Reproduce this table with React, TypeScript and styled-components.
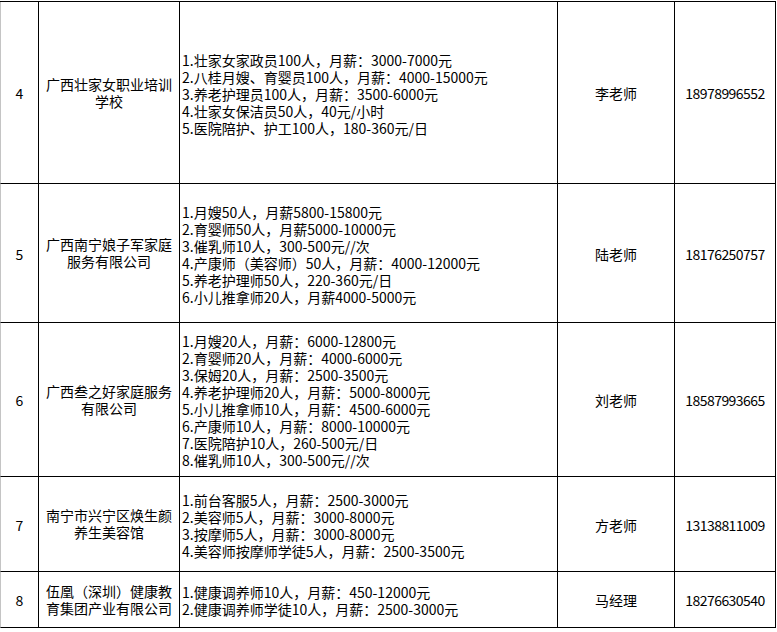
import * as React from 'react'
import styled, { createGlobalStyle } from 'styled-components'

const GlobalStyle = createGlobalStyle`
  html, body {
    margin: 0;
    padding: 0;
    background: #fff;
  }

  body {
    font-family: "Noto Sans CJK SC", "Noto Sans", sans-serif;
    font-size: 14px;
    color: #000;
  }

  * {
    box-sizing: border-box;
  }
`

const COLUMNS = '39px 141px 378px 117px 101px'

const Sheet = styled.section`
  width: 776px;
  margin-top: 1px;
  border-top: 1px solid #000;
  background: #fff;
`

const Row = styled.div<{ $height: number }>`
  display: grid;
  grid-template-columns: ${COLUMNS};
  height: ${(p) => p.$height}px;
`

const Cell = styled.div<{ $align?: 'left' | 'center'; $first?: boolean }>`
  display: flex;
  align-items: center;
  justify-content: ${(p) => (p.$align === 'left' ? 'flex-start' : 'center')};
  text-align: ${(p) => p.$align ?? 'center'};
  border-right: 1px solid #000;
  border-bottom: 1px solid #000;
  border-left: ${(p) => (p.$first ? '1px solid #c4c4c4' : 'none')};
  line-height: 17px;
  overflow: hidden;
  white-space: normal;
`

const CompanyName = styled.div`
  width: 128px;
  text-align: center;
  line-height: 17px;
  word-break: break-all;
`

const JobList = styled.ol`
  list-style: none;
  margin: 0;
  padding: 3px 0 0 2px;
`

const JobItem = styled.li`
  line-height: 17px;
  white-space: nowrap;
`

const Contact = styled.span`
  padding-top: 2px;
`

const Phone = styled.span`
  letter-spacing: -0.55px;
  padding-top: 2px;
`

type Company = {
  no: number
  name: string
  jobs: string[]
  contact: string
  phone: string
  height: number
}

const companies: Company[] = [
  {
    no: 4,
    name: '广西壮家女职业培训学校',
    jobs: [
      '1.壮家女家政员100人，月薪：3000-7000元',
      '2.八桂月嫂、育婴员100人，月薪：4000-15000元',
      '3.养老护理员100人，月薪：3500-6000元',
      '4.壮家女保洁员50人，40元/小时',
      '5.医院陪护、护工100人，180-360元/日',
    ],
    contact: '李老师',
    phone: '18978996552',
    height: 182,
  },
  {
    no: 5,
    name: '广西南宁娘子军家庭服务有限公司',
    jobs: [
      '1.月嫂50人，月薪5800-15800元',
      '2.育婴师50人，月薪5000-10000元',
      '3.催乳师10人，300-500元//次',
      '4.产康师（美容师）50人，月薪：4000-12000元',
      '5.养老护理师50人，220-360元/日',
      '6.小儿推拿师20人，月薪4000-5000元',
    ],
    contact: '陆老师',
    phone: '18176250757',
    height: 139,
  },
  {
    no: 6,
    name: '广西叁之好家庭服务有限公司',
    jobs: [
      '1.月嫂20人，月薪：6000-12800元',
      '2.育婴师20人，月薪：4000-6000元',
      '3.保姆20人，月薪：2500-3500元',
      '4.养老护理师20人，月薪：5000-8000元',
      '5.小儿推拿师10人，月薪：4500-6000元',
      '6.产康师10人，月薪：8000-10000元',
      '7.医院陪护10人，260-500元/日',
      '8.催乳师10人，300-500元//次',
    ],
    contact: '刘老师',
    phone: '18587993665',
    height: 154,
  },
  {
    no: 7,
    name: '南宁市兴宁区焕生颜养生美容馆',
    jobs: [
      '1.前台客服5人，月薪：2500-3000元',
      '2.美容师5人，月薪：3000-8000元',
      '3.按摩师5人，月薪：3000-8000元',
      '4.美容师按摩师学徒5人，月薪：2500-3500元',
    ],
    contact: '方老师',
    phone: '13138811009',
    height: 95,
  },
  {
    no: 8,
    name: '伍凰（深圳）健康教育集团产业有限公司',
    jobs: [
      '1.健康调养师10人，月薪：450-12000元',
      '2.健康调养师学徒10人，月薪：2500-3000元',
    ],
    contact: '马经理',
    phone: '18276630540',
    height: 56,
  },
]

const App: React.FC = () => {
  return (
    <>
      <GlobalStyle />
      <Sheet>
        {companies.map((c) => (
          <Row key={c.no} $height={c.height}>
            <Cell $first>
              <Contact>{c.no}</Contact>
            </Cell>
            <Cell>
              <CompanyName>{c.name}</CompanyName>
            </Cell>
            <Cell $align="left">
              <JobList>
                {c.jobs.map((job) => (
                  <JobItem key={job}>{job}</JobItem>
                ))}
              </JobList>
            </Cell>
            <Cell>
              <Contact>{c.contact}</Contact>
            </Cell>
            <Cell>
              <Phone>{c.phone}</Phone>
            </Cell>
          </Row>
        ))}
      </Sheet>
    </>
  )
}

export default App
